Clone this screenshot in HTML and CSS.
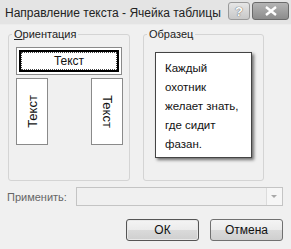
FILE: index.html
```html
<!DOCTYPE html>
<html lang="ru">
<head>
    <meta charset="UTF-8">
    <title>Направление текста - Ячейка таблицы</title>
    <link rel="stylesheet" href="styles.css">
</head>
<body>
    <div class="window">
        <div class="titlebar">
            <span class="title">Направление текста - Ячейка таблицы</span>
            <div class="caption-buttons">
                <span class="cap-btn help">?</span>
                <span class="cap-btn close">
                    <svg width="14" height="10" viewBox="0 0 14 10">
                        <path d="M2 1 L12 9 M12 1 L2 9" stroke="#fff" stroke-width="2.4" fill="none"/>
                    </svg>
                </span>
            </div>
        </div>

        <div class="content">
            <div class="groups">
                <fieldset class="group orient">
                    <legend><u>О</u>риентация</legend>
                    <div class="horiz-outer">
                        <div class="horiz-inner"><span class="focus">Текст</span></div>
                    </div>
                    <div class="vert-row">
                        <div class="vert-box"><span class="up">Текст</span></div>
                        <div class="vert-box"><span class="down">Текст</span></div>
                    </div>
                </fieldset>
                <fieldset class="group sample">
                    <legend>Образец</legend>
                    <div class="sample-box">
                        Каждый<br>
                        охотник<br>
                        желает знать,<br>
                        где сидит<br>
                        фазан.
                    </div>
                </fieldset>
            </div>

            <div class="apply-row">
                <label class="apply-label">Применить:</label>
                <div class="combo">
                    <span class="combo-arrow"></span>
                </div>
            </div>

            <div class="button-row">
                <button class="btn default">ОК</button>
                <button class="btn">Отмена</button>
            </div>
        </div>
    </div>
</body>
</html>
```

FILE: styles.css
```css
body {
    margin: 0;
    background: #f0f0f0;
    font-family: "Liberation Sans", Arial, sans-serif;
    font-size: 12px;
    color: #111;
}
.window {
    width: 291px;
    height: 249px;
    background: #f0f0f0;
    overflow: hidden;
}
.titlebar {
    height: 24px;
    display: flex;
    align-items: center;
    justify-content: space-between;
    padding: 0 2px 0 5px;
    background: #e4e4e4;
    border-bottom: 1px solid #ececec;
    white-space: nowrap;
}
.title {
    font-size: 12px;
    color: #222;
    margin-top: 2px;
}
.caption-buttons {
    display: flex;
    gap: 2px;
    align-self: flex-start;
    margin-top: 2px;
    flex-shrink: 0;
}
.cap-btn {
    height: 16px;
    display: flex;
    align-items: center;
    justify-content: center;
    border: 1px solid #9a9a9a;
    border-radius: 3px;
    font-size: 13px;
    font-weight: bold;
    flex-shrink: 0;
}
.help {
    width: 20px;
    background: linear-gradient(#e6e6e6, #c8c8c8);
    color: #fff;
    text-shadow: 0 0 1px #666, 0 0 1px #666;
}
.close {
    width: 35px;
    background: linear-gradient(#b4b4b4, #8c8c8c);
    border-color: #6a6a6a;
}
.content {
    padding: 3px 8px 0 8px;
}
.groups {
    display: flex;
    gap: 13px;
}
.group {
    margin: 0;
    padding: 0;
    border: 1px solid #d4d4d4;
    border-radius: 3px;
    height: 153px;
    box-sizing: border-box;
}
.group legend {
    padding: 0 2px;
    margin-left: 3px;
    font-size: 11px;
    line-height: 13px;
    color: #222;
}
.orient {
    width: 122px;
}
.sample {
    width: 121px;
}
.horiz-outer {
    margin: 6px 0 0 7px;
    border: 1px solid #8a8a8a;
    background: #fff;
    padding: 2px;
    box-sizing: border-box;
    width: 106px;
    height: 28px;
}
.horiz-inner {
    height: 100%;
    border: 2px solid #000;
    box-sizing: border-box;
    display: flex;
    padding: 1px;
}
.focus {
    flex: 1;
    display: flex;
    align-items: center;
    justify-content: center;
    outline: 1px dotted #444;
    font-size: 12px;
}
.vert-row {
    display: flex;
    justify-content: space-between;
    margin: 3px 0 0 7px;
    width: 107px;
}
.vert-box {
    width: 32px;
    height: 67px;
    border: 1px solid #8a8a8a;
    background: #fff;
    box-sizing: border-box;
    display: flex;
    align-items: center;
    justify-content: center;
    font-size: 13px;
}
.up {
    transform: rotate(-90deg);
}
.down {
    transform: rotate(90deg);
}
.sample-box {
    margin: 11px 0 0 11px;
    width: 97px;
    height: 106px;
    box-sizing: border-box;
    border: 1px solid #444;
    background: #fff;
    box-shadow: 2px 2px 3px rgba(0, 0, 0, 0.55);
    padding: 6px 0 0 9px;
    font-size: 11.5px;
    line-height: 19px;
}
.apply-row {
    display: flex;
    align-items: center;
    margin-top: 6px;
    margin-left: -1px;
}
.apply-label {
    width: 69px;
    color: #666;
    font-size: 11px;
}
.combo {
    width: 207px;
    height: 19px;
    box-sizing: border-box;
    border: 1px solid #c4c4c4;
    background: #f0f0f0;
    display: flex;
    justify-content: flex-end;
}
.combo-arrow {
    width: 15px;
    border-left: 1px solid #dcdcdc;
    background: #f6f6f6;
    position: relative;
}
.combo-arrow::after {
    content: "";
    position: absolute;
    left: 4px;
    top: 7px;
    border-left: 3px solid transparent;
    border-right: 3px solid transparent;
    border-top: 3px solid #a8a8a8;
}
.button-row {
    display: flex;
    justify-content: flex-end;
    gap: 11px;
    margin-top: 13px;
}
.btn {
    width: 73px;
    height: 22px;
    border: 1px solid #707070;
    border-radius: 3px;
    background: linear-gradient(#f4f4f4 0%, #ebebeb 50%, #dadada 51%, #cfcfcf 100%);
    font-family: "Liberation Sans", Arial, sans-serif;
    font-size: 12px;
    color: #111;
    padding: 0;
}
.btn.default {
    border-color: #555;
    box-shadow: inset 0 0 0 1px #e8e8e8;
}
```
